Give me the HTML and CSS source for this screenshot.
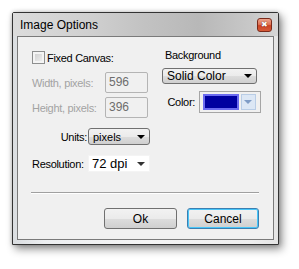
FILE: index.html
```html
<!DOCTYPE html>
<html lang="en">
<head>
    <meta charset="UTF-8">
    <title>Image Options</title>
    <link rel="stylesheet" href="styles.css">
</head>
<body>
    <div class="window">
        <div class="titlebar">
            <span class="title">Image Options</span>
            <button class="close">&#10006;</button>
        </div>
        <div class="client">
            <div class="top">
                <div class="left">
                    <label class="check-row">
                        <span class="checkbox"></span>
                        <span>Fixed Canvas:</span>
                    </label>
                    <div class="field">
                        <span class="field-label disabled">Width, pixels:</span>
                        <span class="textbox">596</span>
                    </div>
                    <div class="field second">
                        <span class="field-label disabled">Height, pixels:</span>
                        <span class="textbox">396</span>
                    </div>
                    <div class="units-row">
                        <span class="units-label">Units:</span>
                        <span class="select small">pixels<i class="arrow"></i></span>
                    </div>
                    <div class="res-row">
                        <span class="res-label">Resolution:</span>
                        <span class="combo">72 dpi<i class="arrow"></i></span>
                    </div>
                </div>
                <div class="right">
                    <div class="bg-label">Background</div>
                    <span class="select wide">Solid Color<i class="arrow"></i></span>
                    <div class="color-row">
                        <span class="color-label">Color:</span>
                        <span class="color-picker">
                            <span class="swatch"></span>
                            <span class="drop"><i class="arrow pale"></i></span>
                        </span>
                    </div>
                </div>
            </div>
            <div class="sep"></div>
            <div class="actions">
                <button class="btn">Ok</button>
                <button class="btn default">Cancel</button>
            </div>
        </div>
    </div>
</body>
</html>
```

FILE: styles.css
```css
* {
    box-sizing: border-box;
    margin: 0;
    padding: 0;
}

body {
    width: 299px;
    height: 269px;
    overflow: hidden;
    background-color: #fff;
    font-family: "Liberation Sans", Arial, sans-serif;
    font-size: 11px;
    letter-spacing: -0.3px;
    color: #000;
}

.window {
    margin: 12px 0 0 12px;
    width: 267px;
    height: 233px;
    border: 1px solid #333;
    border-radius: 2px 2px 0 0;
    padding: 0 4px 4px 4px;
    display: flex;
    flex-direction: column;
    background: linear-gradient(90deg, #dadde0 0%, #eceef0 12%, #f4f4f4 50%, #eeeeee 90%, #e4e4e4 100%);
    box-shadow: 3px 4px 9px rgba(0,0,0,0.45), 0 0 4px rgba(0,0,0,0.2);
}

.titlebar {
    height: 23px;
    display: flex;
    align-items: center;
    justify-content: space-between;
    margin: 0 -4px;
    padding-left: 7px;
    padding-right: 6px;
    background: linear-gradient(90deg, #dcdcdc 0%, #cfcfcf 30%, #c2c2c2 50%, #b8b8b8 70%, #c8c8c8 90%, #d6d6d6 100%);
}

.title {
    font-size: 12px;
    letter-spacing: 0;
}

.close {
    width: 15px;
    height: 14px;
    border: 1px solid #7a2a1a;
    border-radius: 3px;
    background: linear-gradient(#eea48c 0%, #df7456 45%, #cc4424 55%, #d65a38 100%);
    color: #fff;
    font-size: 8px;
    line-height: 12px;
    text-align: center;
    text-shadow: 0 0 1px #300;
}

.client {
    flex: 1;
    border: 1px solid #7a7a7a;
    background-color: #f0f0f0;
    padding: 14px 14px 0 13px;
    overflow: hidden;
}

.top {
    display: grid;
    grid-template-columns: 130px 99px;
    height: 141px;
    padding-left: 1px;
}

.check-row {
    display: flex;
    align-items: center;
    height: 13px;
}

.checkbox {
    width: 13px;
    height: 13px;
    margin-right: 2px;
    border: 1px solid #8e8f8f;
    background: linear-gradient(135deg, #cbcbcb, #f4f4f4);
    box-shadow: inset 0 0 0 2px #f4f4f4;
}

.field {
    display: flex;
    align-items: center;
    margin-top: 8px;
}

.field.second {
    margin-top: 4px;
}

.field-label {
    width: 73px;
}

.disabled {
    color: #a3a3a3;
}

.textbox {
    width: 43px;
    height: 21px;
    border: 1px solid #b4b4b4;
    border-radius: 2px;
    padding: 2px 3px;
    color: #6d6d6d;
    font-size: 12px;
    letter-spacing: 0;
}

.units-row,
.res-row {
    display: flex;
    align-items: center;
    margin-top: 10px;
}

.units-label {
    width: 55px;
    margin-right: 1px;
    text-align: right;
}

.res-label {
    width: 56px;
}

.select {
    position: relative;
    display: flex;
    align-items: center;
    height: 17px;
    padding-left: 4px;
    border: 1px solid #707070;
    border-radius: 3px;
    background: linear-gradient(#f2f2f2 0%, #ebebeb 50%, #dddddd 51%, #cfcfcf 100%);
    font-size: 12px;
    letter-spacing: 0;
}

.select.small {
    width: 62px;
    font-size: 11px;
}

.select.wide {
    width: 95px;
    height: 16px;
}

.combo {
    position: relative;
    display: flex;
    align-items: center;
    width: 62px;
    height: 17px;
    padding-left: 3px;
    background-color: #fff;
    border: 1px solid #f4f4f4;
    font-size: 13px;
    letter-spacing: 0;
}

.arrow {
    position: absolute;
    right: 4px;
    top: 50%;
    margin-top: -2px;
    border-left: 4px solid transparent;
    border-right: 4px solid transparent;
    border-top: 4px solid #000;
}

.combo .arrow {
    border-top-color: #333;
}

.arrow.pale {
    right: 3px;
    border-top-color: #7f9cc6;
}

.bg-label {
    height: 13px;
    margin: -2px 0 6px 3px;
}

.color-row {
    display: flex;
    align-items: center;
    justify-content: flex-end;
    margin-top: 7px;
}

.color-label {
    margin-right: 4px;
}

.color-picker {
    display: flex;
    align-items: center;
    width: 62px;
    height: 22px;
    padding: 2px 3px;
    border: 1px solid #a5a5a5;
    gap: 2px;
}

.swatch {
    width: 36px;
    height: 16px;
    background-color: #0000a0;
    border: 2px solid #6b6bf0;
}

.drop {
    position: relative;
    width: 15px;
    height: 16px;
    background-color: #dce7f5;
    border: 1px solid #b9cde6;
}

.sep {
    width: 228px;
    border-top: 1px solid #a0a0a0;
    border-bottom: 1px solid #fff;
}

.actions {
    display: flex;
    justify-content: flex-end;
    gap: 10px;
    margin-top: 14px;
}

.btn {
    width: 73px;
    height: 21px;
    border: 1px solid #707070;
    border-radius: 3px;
    background: linear-gradient(#f2f2f2 0%, #ebebeb 50%, #dddddd 51%, #cfcfcf 100%);
    font-family: "Liberation Sans", Arial, sans-serif;
    font-size: 12px;
    color: #000;
}

.btn.default {
    width: 72px;
    border-color: #3c7fb1;
    box-shadow: inset 0 0 0 1px #48c6f9;
}
```
